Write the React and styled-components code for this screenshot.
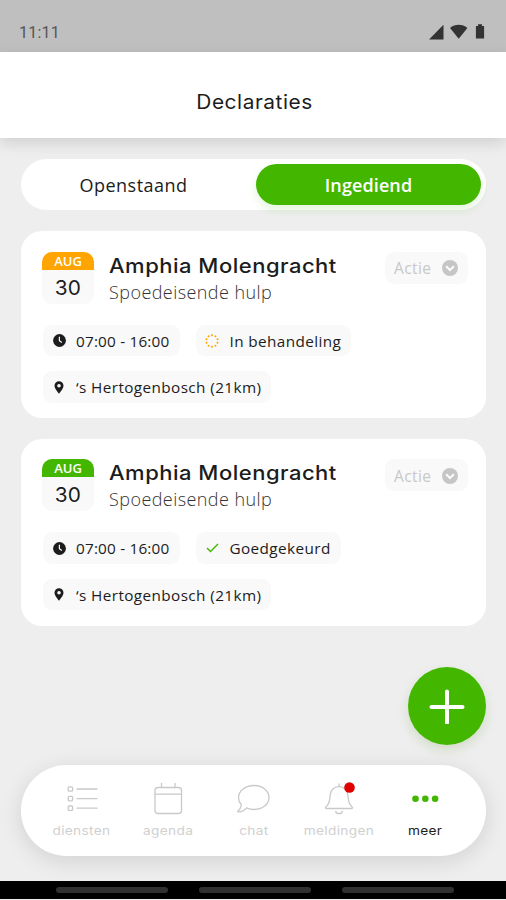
import React from "react";
import styled, { createGlobalStyle } from "styled-components";

const GREEN = "#43b700";
const ORANGE = "#ffa400";

const GlobalStyle = createGlobalStyle`
  * { box-sizing: border-box; }
  body { margin: 0; background: #eee; }
  button { border: 0; padding: 0; background: none; font: inherit; color: inherit; }
  svg { display: block; flex: none; }
`;

const Screen = styled.div`
  width: 506px;
  height: 900px;
  overflow: hidden;
  display: flex;
  flex-direction: column;
  background: #eee;
  font-family: "Open Sans", sans-serif;
  color: #1c1c1c;
  white-space: nowrap;
`;

const StatusBar = styled.div`
  flex: none;
  height: 52px;
  padding: 12px 21px 0 19px;
  display: flex;
  align-items: center;
  justify-content: space-between;
  background: #bfbfbf;
`;

const Clock = styled.span`
  padding-top: 2px;
  font: 400 16px/20px Roboto, sans-serif;
  letter-spacing: 0.2px;
  color: #555;
`;

const StatusIcons = styled.div`
  display: flex;
  align-items: center;
  color: #333;
`;

const Header = styled.header`
  flex: none;
  height: 86px;
  padding-top: 13px;
  display: flex;
  align-items: center;
  justify-content: center;
  background: #fff;
  box-shadow: 0 5px 14px rgba(0, 0, 0, 0.13);
`;

const HeaderTitle = styled.h1`
  margin: 0;
  padding-left: 3px;
  font: 400 19.5px/24px Inter, sans-serif;
  letter-spacing: 0.5px;
  transform: scaleX(1.07);
`;

const Content = styled.main`
  flex: 1;
  min-height: 0;
  padding: 21px 20px 0 21px;
  display: flex;
  flex-direction: column;
`;

const Tabs = styled.div`
  flex: none;
  height: 51px;
  padding: 5px;
  display: grid;
  grid-template-columns: 230px 225px;
  border-radius: 26px;
  background: #fff;
`;

const Tab = styled.button`
  border-radius: 21px;
  padding-right: ${(p) => (p.$active ? "0" : "15px")};
  font-size: 18px;
  font-weight: ${(p) => (p.$active ? 600 : 400)};
  letter-spacing: ${(p) => (p.$active ? "0.1px" : "0.5px")};
  color: ${(p) => (p.$active ? "#fff" : "#1c1c1c")};
  background: ${(p) => (p.$active ? GREEN : "transparent")};
  box-shadow: ${(p) => (p.$active ? "0 5px 10px rgba(67, 183, 0, 0.14)" : "none")};
`;

const Card = styled.article`
  flex: none;
  height: 187px;
  margin-top: ${(p) => (p.$first ? "21px" : "20.5px")};
  padding: 20.5px 18px 0 21px;
  border-radius: 21px;
  background: #fff;
`;

const CardTop = styled.div`
  height: 52px;
  display: flex;
  align-items: flex-start;
`;

const DateBox = styled.div`
  width: 52px;
  height: 52px;
  margin-right: 15px;
  border-radius: 10px;
  overflow: hidden;
  background: #f9f9f9;
  text-align: center;
`;

const Month = styled.div`
  height: 18px;
  font-size: 13px;
  line-height: 19px;
  font-weight: 600;
  color: #fff;
  background: ${(p) => p.$color};
`;

const Day = styled.div`
  font: 400 20px/36px Inter, sans-serif;
  letter-spacing: 0.3px;
  transform: scaleX(1.04);
`;

const Titles = styled.div`
  flex: 1;
`;

const CardTitle = styled.h2`
  margin: 0;
  padding-top: 1px;
  font: 500 20px/26px Inter, sans-serif;
  letter-spacing: 0.45px;
  transform: scaleX(1.1);
  transform-origin: left;
`;

const Department = styled.div`
  font-size: 18px;
  line-height: 27px;
  font-weight: 300;
  letter-spacing: 0.43px;
  color: #333;
`;

const ActionButton = styled.button`
  width: 83px;
  height: 32px;
  padding: 1px 10px 0 9px;
  display: flex;
  align-items: center;
  justify-content: space-between;
  border-radius: 9px;
  background: #f9f9f9;
  color: #c8c8c8;
  font-size: 15.5px;
  letter-spacing: 0.4px;
`;

const Chips = styled.div`
  display: flex;
  flex-wrap: wrap;
  gap: 15px 16px;
  margin: 21px 0 0 1px;
`;

const Chip = styled.div`
  height: 31.5px;
  padding: 1px 10px 0 9px;
  display: flex;
  align-items: center;
  border-radius: 9px;
  background: #f9f9f9;
  font-size: 15.3px;
  letter-spacing: ${(p) => p.$spacing || "0.4px"};
`;

const TimeChip = styled(Chip)`
  padding-right: 11px;
`;

const ChipIcon = styled.span`
  width: 14px;
  margin-right: 10px;
  display: flex;
  justify-content: center;
`;

const FabRow = styled.div`
  display: flex;
  justify-content: flex-end;
  margin-top: 41px;
`;

const Fab = styled.button`
  width: 78px;
  height: 78px;
  display: flex;
  align-items: center;
  justify-content: center;
  border-radius: 50%;
  background: ${GREEN};
  box-shadow: 0 5px 12px rgba(67, 130, 0, 0.16);
`;

const BottomNav = styled.nav`
  flex: none;
  height: 91px;
  margin: 0 20px 25px 21px;
  padding: 17px 18px 0 18px;
  display: grid;
  grid-template-columns: repeat(5, 1fr);
  border-radius: 46px;
  background: #fff;
  box-shadow: 0 5px 22px rgba(0, 0, 0, 0.12);
`;

const NavItem = styled.div`
  display: flex;
  flex-direction: column;
  align-items: center;
  gap: 4px;
  color: ${(p) => (p.$active ? "#1c1c1c" : "#d0d0d0")};
`;

const NavLabel = styled.span`
  font: 400 12px/22px Inter, sans-serif;
  letter-spacing: 0.3px;
  transform: scaleX(1.14);
`;

const SystemBar = styled.div`
  flex: none;
  height: 18px;
  margin-bottom: 1px;
  display: flex;
  justify-content: center;
  align-items: center;
  gap: 31px;
  background: #000;
  padding-left: 4px;
`;

const SystemPill = styled.span`
  width: 112px;
  height: 6px;
  border-radius: 3px;
  background: #303030;
`;

const StatusGlyphs = () => (
  <svg width="56" height="16" viewBox="0 0 56 16" fill="currentColor">
    <path d="M0 15.4 14.500 .8v14.6Z" />
    <path d="M21 4c5-4.3 12.400-4.300 17.400 0l-8.700 10.700Z" />
    <path d="M46.900 2h2.100V.3h4V2h2.100v12.600h-8.200Z" />
  </svg>
);

const ChevronBadge = () => (
  <svg width="16" height="16" viewBox="0 0 16 16">
    <circle cx="8" cy="8" r="8" fill="#c6c6c6" />
    <path d="m4.200 6.300 3.800 3.800 3.800-3.800" fill="none" stroke="#fff" strokeWidth="2" />
  </svg>
);

const ClockIcon = () => (
  <svg width="13" height="13" viewBox="0 0 13 13">
    <circle cx="6.500" cy="6.500" r="6.400" fill="#1c1c1c" />
    <path d="M6.400 2.700v4l2.400 1.800" fill="none" stroke="#fff" strokeWidth="1.200" />
  </svg>
);

const PinIcon = () => (
  <svg width="10" height="13" viewBox="0 0 10 13">
    <path
      fillRule="evenodd"
      fill="#1c1c1c"
      d="M5 .2a4.500 4.500 0 0 1 4.500 4.500C9.500 7.400 6.500 10.500 5 12.800 3.500 10.500.5 7.400.5 4.700A4.500 4.500 0 0 1 5 .2Zm0 2.700a1.800 1.800 0 1 0 0 3.600 1.800 1.800 0 0 0 0-3.600Z"
    />
  </svg>
);

const SpinnerIcon = () => (
  <svg width="14" height="14" viewBox="0 0 14 14" fill={ORANGE}>
    {[0, 36, 72, 108, 144, 180, 216, 252, 288, 324].map((angle) => (
      <circle key={angle} cx="7" cy="1.200" r="1" transform={`rotate(${angle} 7 7)`} />
    ))}
  </svg>
);

const CheckIcon = () => (
  <svg width="13" height="10" viewBox="0 0 13 10">
    <path d="m1 5 3.500 3.600L12 1" fill="none" stroke={GREEN} strokeWidth="1.400" />
  </svg>
);

const PlusIcon = () => (
  <svg width="36" height="36" viewBox="0 0 36 36">
    <path d="M18 3.500v31M2.500 19h31" stroke="#fff" strokeWidth="4" strokeLinecap="round" />
  </svg>
);

const NavIcon = ({ children }) => (
  <svg
    width="36"
    height="34"
    viewBox="0 0 36 34"
    fill="none"
    stroke="#c9c9c9"
    strokeWidth="1.300"
    strokeLinejoin="round"
    strokeLinecap="round"
  >
    {children}
  </svg>
);

const ListIcon = () => (
  <NavIcon>
    {[7, 16.6, 26.2].map((y) => (
      <React.Fragment key={y}>
        <rect x="4.200" y={y - 2.2} width="4.400" height="4.400" rx="1" />
        <path d={`M13 ${y}h20`} />
      </React.Fragment>
    ))}
  </NavIcon>
);

const CalendarIcon = () => (
  <NavIcon>
    <rect x="5" y="5.500" width="26.500" height="26" rx="3" />
    <path d="M5 12.200h26.500M11.500 1.500v4M25 1.500v4" />
  </NavIcon>
);

const ChatIcon = () => (
  <NavIcon>
    <path d="M19 3.500c8.500 0 15 5.200 15 12s-6.500 12-15 12c-2.700 0-5.200-.5-7.500-1.600-2 2.600-5.400 4.300-9 3.800 2.200-1.900 3.600-4.300 3.900-7C4.500 20.700 3.500 18.200 3.500 15.500c0-6.800 7-12 15.500-12Z" />
  </NavIcon>
);

const BellIcon = () => (
  <NavIcon>
    <path d="M18 2v2.400M18 4.400c-5.300.3-8.700 4.200-8.900 9.200-.2 6-1.300 8.900-4.200 11.300-.7.700-.4 1.600.6 1.600h25c1 0 1.300-.9.6-1.600-2.900-2.400-4-5.300-4.200-11.300-.2-5-3.600-8.900-8.900-9.200ZM14.800 29.500c.7 2.800 5.700 2.800 6.400 0" />
    <circle cx="28.500" cy="5.500" r="5.300" fill="#e00000" stroke="none" />
  </NavIcon>
);

const MoreIcon = () => (
  <NavIcon>
    <g fill={GREEN} stroke="none">
      <circle cx="8.500" cy="16.700" r="3.300" />
      <circle cx="18.300" cy="16.700" r="3.300" />
      <circle cx="28.100" cy="16.700" r="3.300" />
    </g>
  </NavIcon>
);

function Declaration({ first, color, icon, status }) {
  return (
    <Card $first={first}>
      <CardTop>
        <DateBox>
          <Month $color={color}>AUG</Month>
          <Day>30</Day>
        </DateBox>
        <Titles>
          <CardTitle>Amphia Molengracht</CardTitle>
          <Department>Spoedeisende hulp</Department>
        </Titles>
        <ActionButton>
          Actie <ChevronBadge />
        </ActionButton>
      </CardTop>
      <Chips>
        <TimeChip $spacing="0.2px">
          <ChipIcon><ClockIcon /></ChipIcon>
          07:00 - 16:00
        </TimeChip>
        <Chip>
          <ChipIcon>{icon}</ChipIcon>
          {status}
        </Chip>
        <Chip>
          <ChipIcon><PinIcon /></ChipIcon>
          ‘s Hertogenbosch (21km)
        </Chip>
      </Chips>
    </Card>
  );
}

export default function App() {
  return (
    <Screen>
      <GlobalStyle />
      <StatusBar>
        <Clock>11:11</Clock>
        <StatusIcons><StatusGlyphs /></StatusIcons>
      </StatusBar>
      <Header>
        <HeaderTitle>Declaraties</HeaderTitle>
      </Header>
      <Content>
        <Tabs>
          <Tab>Openstaand</Tab>
          <Tab $active>Ingediend</Tab>
        </Tabs>
        <Declaration first color={ORANGE} icon={<SpinnerIcon />} status="In behandeling" />
        <Declaration color={GREEN} icon={<CheckIcon />} status="Goedgekeurd" />
        <FabRow>
          <Fab aria-label="Toevoegen"><PlusIcon /></Fab>
        </FabRow>
      </Content>
      <BottomNav>
        <NavItem><ListIcon /><NavLabel>diensten</NavLabel></NavItem>
        <NavItem><CalendarIcon /><NavLabel>agenda</NavLabel></NavItem>
        <NavItem><ChatIcon /><NavLabel>chat</NavLabel></NavItem>
        <NavItem><BellIcon /><NavLabel>meldingen</NavLabel></NavItem>
        <NavItem $active><MoreIcon /><NavLabel>meer</NavLabel></NavItem>
      </BottomNav>
      <SystemBar>
        <SystemPill />
        <SystemPill />
        <SystemPill />
      </SystemBar>
    </Screen>
  );
}
